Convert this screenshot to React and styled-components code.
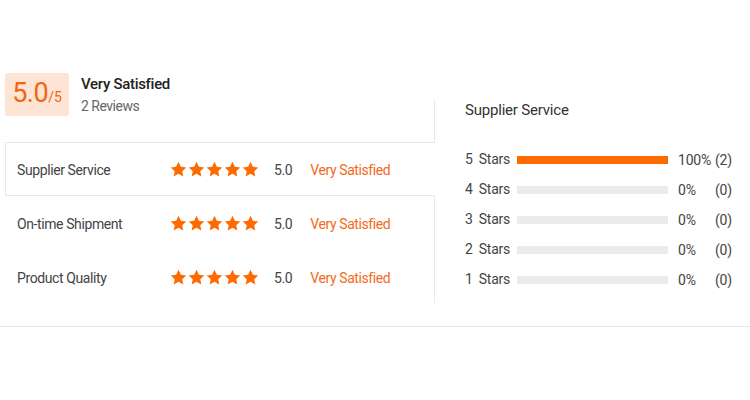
import styled, { createGlobalStyle } from 'styled-components'

const GlobalStyle = createGlobalStyle`
  html, body {
    margin: 0;
    padding: 0;
    background: #fff;
  }
  body {
    font-family: Roboto, "Liberation Sans", Arial, sans-serif;
    color: #333;
  }
`

const criteria = [
  { name: 'Supplier Service', score: '5.0', label: 'Very Satisfied', active: true },
  { name: 'On-time Shipment', score: '5.0', label: 'Very Satisfied' },
  { name: 'Product Quality', score: '5.0', label: 'Very Satisfied' },
]

const distribution = [
  { stars: 5, pct: 100, count: 2 },
  { stars: 4, pct: 0, count: 0 },
  { stars: 3, pct: 0, count: 0 },
  { stars: 2, pct: 0, count: 0 },
  { stars: 1, pct: 0, count: 0 },
]

function Star() {
  return (
    <svg width="17" height="17" viewBox="0 0 24 24">
      <path
        fill="#ff6a00"
        d="M12 1.2l3.3 7 7.6.9-5.6 5.2 1.5 7.5L12 18l-6.8 3.8 1.5-7.5L1.1 9.1l7.6-.9z"
      />
    </svg>
  )
}

function App() {
  return (
    <Page>
      <GlobalStyle />
      <Section>
        <LeftColumn>
          <Summary>
            <ScoreBox>
              <ScoreBig>5.0</ScoreBig>
              <ScoreSmall>/5</ScoreSmall>
            </ScoreBox>
            <SummaryText>
              <SummaryTitle>Very Satisfied</SummaryTitle>
              <SummaryCount>2 Reviews</SummaryCount>
            </SummaryText>
          </Summary>
          <Tabs>
            {criteria.map((c) => (
              <Tab key={c.name} active={c.active}>
                <TabName>{c.name}</TabName>
                <Stars>
                  {[0, 1, 2, 3, 4].map((i) => <Star key={i} />)}
                </Stars>
                <TabScore>{c.score}</TabScore>
                <TabLabel>{c.label}</TabLabel>
              </Tab>
            ))}
          </Tabs>
        </LeftColumn>
        <RightPanel>
          <PanelTitle>Supplier Service</PanelTitle>
          <Bars>
            {distribution.map((d) => (
              <BarRow key={d.stars}>
                <BarLabel>
                  <span>{d.stars}</span>
                  <span>Stars</span>
                </BarLabel>
                <Track>
                  <Fill style={{ width: `${d.pct}%` }} />
                </Track>
                <Pct>{d.pct}%</Pct>
                <Count>({d.count})</Count>
              </BarRow>
            ))}
          </Bars>
        </RightPanel>
      </Section>
    </Page>
  )
}

const Page = styled.div`
  padding-top: 73px;
`

const Section = styled.div`
  display: flex;
  align-items: flex-start;
  padding: 0 0 22px 5px;
  border-bottom: 1px solid #e6e6e6;
`

const LeftColumn = styled.div`
  width: 429px;
  display: flex;
  flex-direction: column;
`

const Summary = styled.div`
  display: flex;
  align-items: center;
  gap: 12px;
`

const ScoreBox = styled.div`
  width: 64px;
  height: 43px;
  box-sizing: border-box;
  border-radius: 3px;
  background: #fee4d5;
  display: flex;
  align-items: baseline;
  justify-content: center;
  padding-top: 4px;
  color: #f26511;
`

const ScoreBig = styled.span`
  font-size: 27px;
  line-height: 32px;
  letter-spacing: -0.5px;
`

const ScoreSmall = styled.span`
  font-size: 14px;
`

const SummaryText = styled.div`
  display: flex;
  flex-direction: column;
  gap: 4px;
  margin-top: 1px;
`

const SummaryTitle = styled.div`
  font-size: 15px;
  font-weight: 500;
  color: #222;
  line-height: 18px;
  letter-spacing: -0.3px;
`

const SummaryCount = styled.div`
  font-size: 14px;
  color: #666;
  line-height: 18px;
  letter-spacing: -0.5px;
`

const Tabs = styled.div`
  margin-top: 26px;
  display: flex;
  flex-direction: column;
`

const Tab = styled.div`
  position: relative;
  z-index: 1;
  height: 54px;
  box-sizing: border-box;
  display: flex;
  align-items: center;
  padding: 2px 0 0 11px;
  background: #fff;
  margin-right: ${(p) => (p.active ? '-1px' : '0')};
  border: 1px solid ${(p) => (p.active ? '#e8e8e8' : 'transparent')};
  border-right: none;
  font-size: 14px;
  letter-spacing: -0.4px;
`

const TabName = styled.div`
  width: 153px;
  color: #444;
`

const Stars = styled.div`
  display: flex;
  gap: 1px;
  margin-top: -2px;
`

const TabScore = styled.div`
  margin-left: 15px;
  color: #444;
`

const TabLabel = styled.div`
  margin-left: 18px;
  color: #f26a21;
`

const RightPanel = styled.div`
  flex: 1;
  margin-top: 27px;
  height: 203px;
  border-left: 1px solid #e8e8e8;
  padding-left: 30px;
  box-sizing: border-box;
`

const PanelTitle = styled.div`
  font-size: 15px;
  line-height: 20px;
  color: #333;
  letter-spacing: -0.2px;
`

const Bars = styled.div`
  margin-top: 25px;
  display: flex;
  flex-direction: column;
`

const BarRow = styled.div`
  height: 30px;
  display: flex;
  align-items: center;
  font-size: 14px;
  color: #444;
  letter-spacing: -0.2px;
`

const BarLabel = styled.div`
  width: 52px;
  display: flex;
  gap: 6px;
  margin-top: -2px;
`

const Track = styled.div`
  width: 151px;
  height: 8px;
  background: #ebebeb;
`

const Fill = styled.div`
  height: 100%;
  background: #ff6a00;
`

const Pct = styled.div`
  margin-left: 10px;
  width: 37px;
`

const Count = styled.div``

export default App
